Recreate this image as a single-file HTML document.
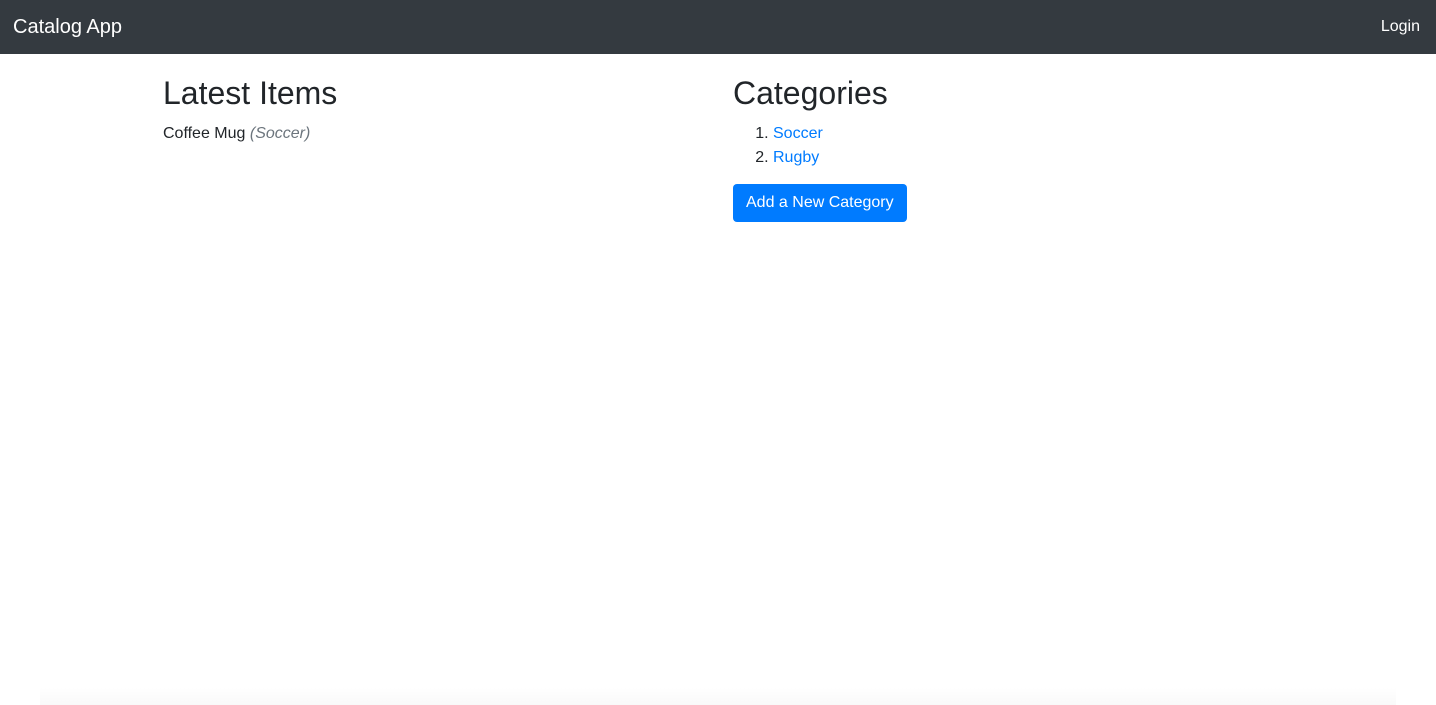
<!DOCTYPE html>
<html><head><style>
*{box-sizing:border-box}
body{margin:0;font-family:"Liberation Sans",Arial,sans-serif;font-size:16px;line-height:1.5;color:#212529;background:#fff;width:1436px;height:705px;overflow:hidden;position:relative}
.nav{height:54px;background:#343a40;display:flex;align-items:center;justify-content:space-between;padding:0 16px 0 13px}
.brand{color:#fff;font-size:20px}
.login{color:#fff;font-size:16px}
.col{position:absolute;top:54px;width:540px}
.c1{left:163px}.c2{left:733px}
h2{font-size:32px;font-weight:500;margin:20px 0 10px;line-height:1.2}
ol{margin:0 0 14px;padding-left:40px}
a{color:#007bff;text-decoration:none}
em{color:#6c757d}
.btn{display:inline-block;background:#007bff;color:#fff;border-radius:4px;padding:6px 13px;line-height:26px;font-size:16px;height:38px}
.shadow{position:absolute;left:40px;right:40px;bottom:0;height:18px;background:linear-gradient(to bottom,rgba(0,0,0,0),rgba(0,0,0,0.025))}
</style></head><body>
<div class="nav"><span class="brand">Catalog App</span><span class="login">Login</span></div>
<div class="col c1"><h2>Latest Items</h2><div>Coffee Mug <em>(Soccer)</em></div></div>
<div class="col c2"><h2>Categories</h2>
<ol><li><a>Soccer</a></li><li><a>Rugby</a></li></ol>
<a class="btn">Add a New Category</a></div>
<div class="shadow"></div>
</body></html>
